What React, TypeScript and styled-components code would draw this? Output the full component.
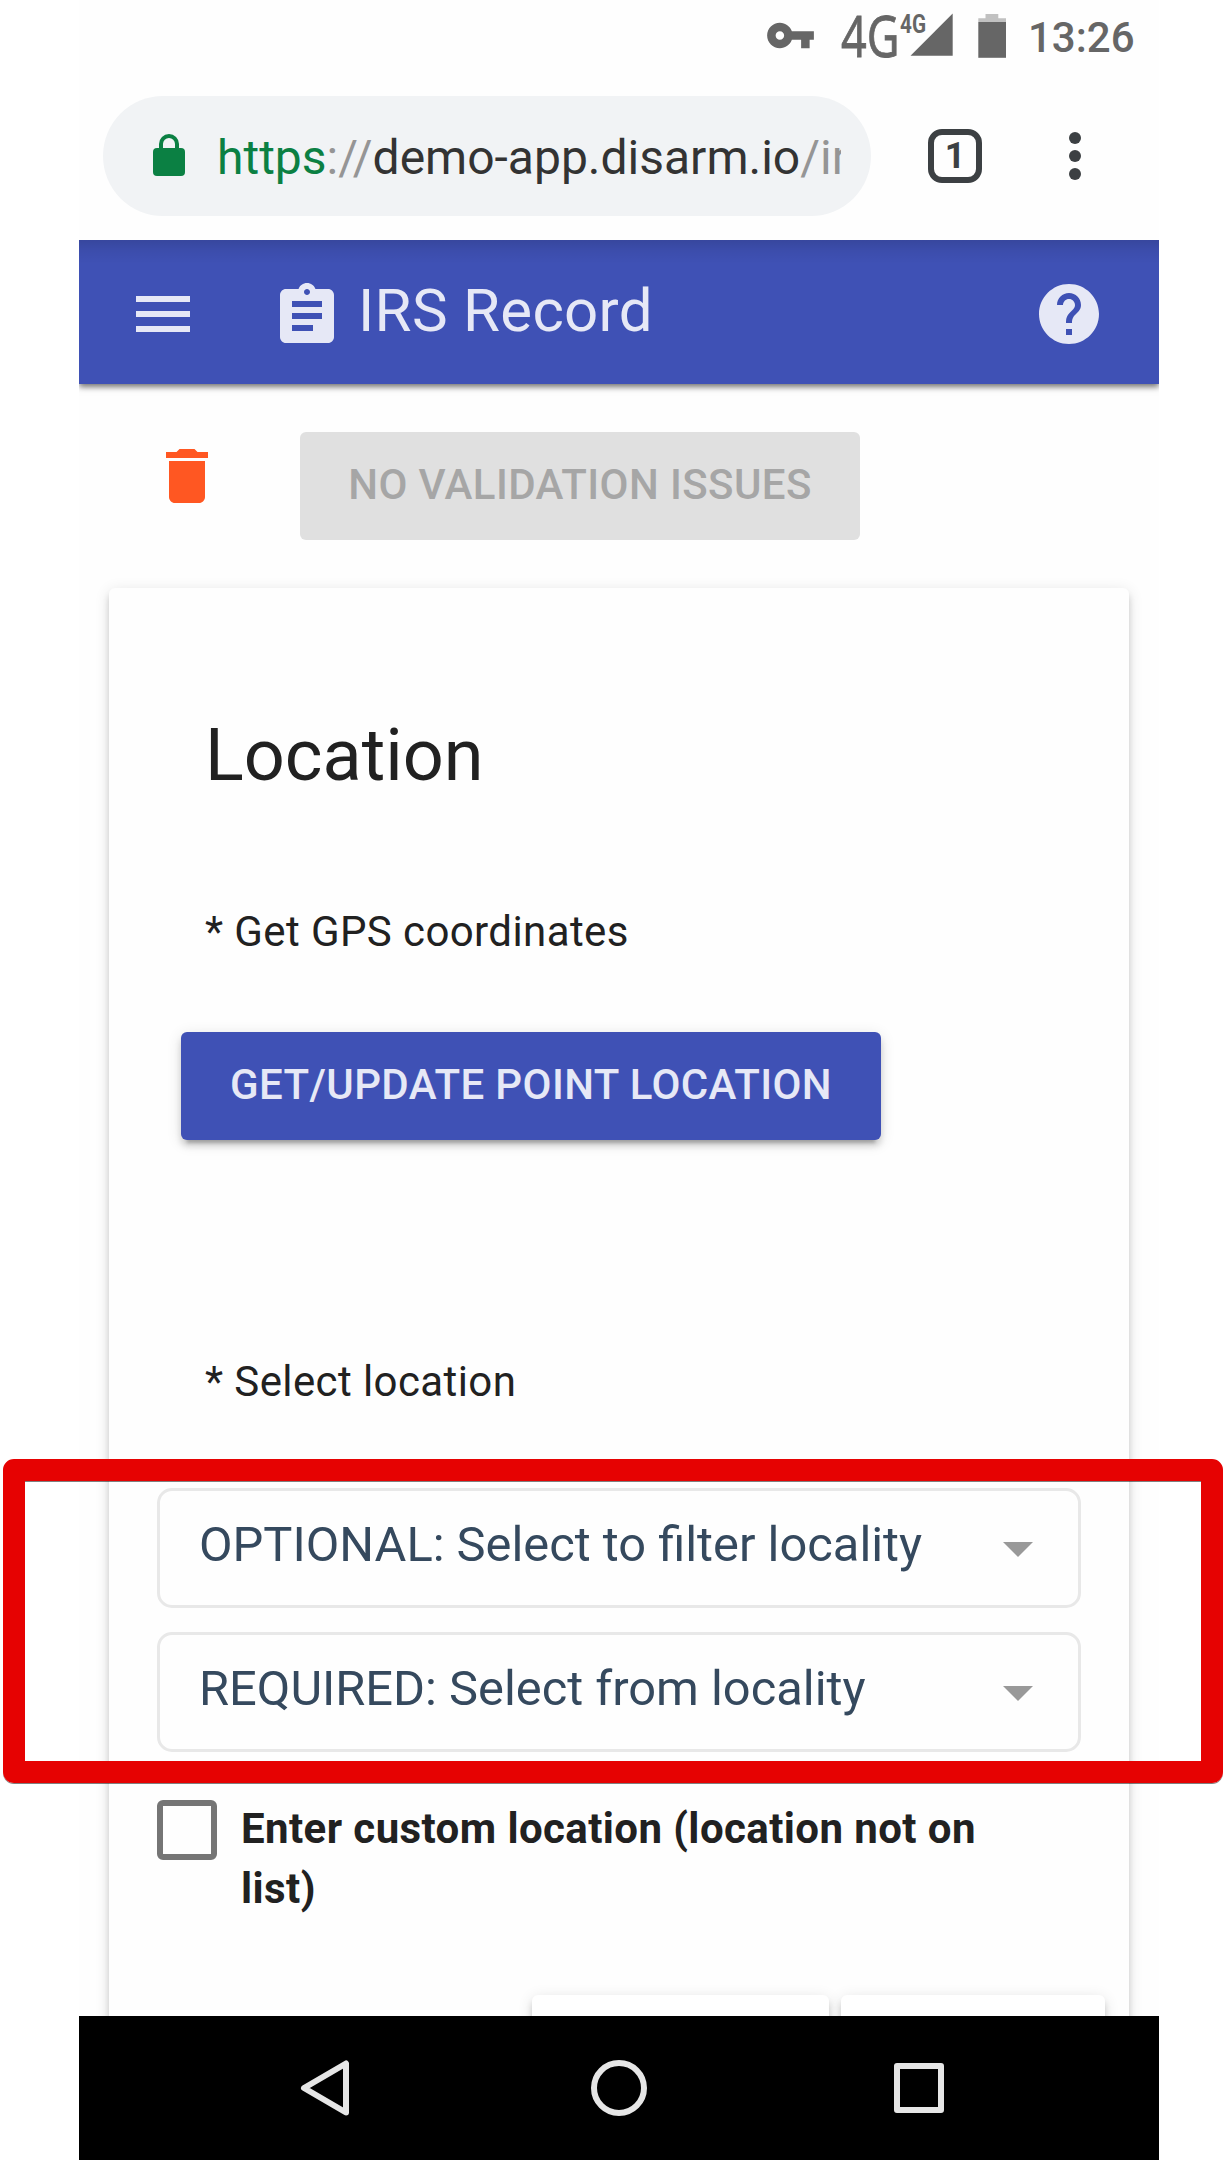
import React from "react";
import styled, { createGlobalStyle } from "styled-components";

const GlobalStyle = createGlobalStyle`
  *, *::before, *::after { box-sizing: border-box; }
  html, body { margin: 0; padding: 0; background: #fff; }
  body { font-family: Roboto, "Liberation Sans", sans-serif; overflow: hidden; }
  h1, h2, p { margin: 0; font-weight: 400; }
`;

const Page = styled.div`
  position: relative;
  width: 1227px;
  height: 2160px;
  padding-left: 79px;
  overflow: hidden;
  background: #fff;
`;

const Screen = styled.div`
  display: flex;
  flex-direction: column;
  width: 1080px;
  height: 2160px;
  background: #fefefe;
  overflow: hidden;
`;

const StatusBar = styled.header`
  display: flex;
  flex: none;
  height: 72px;
  padding-left: 686px;
  color: #666;
`;

const KeySlot = styled.div`
  width: 76px;
  padding-top: 10px;
`;

const SignalSlot = styled.div`
  width: 137px;
`;

const SignalIcon = styled.svg`
  display: block;
  width: 112px;
  height: 72px;
  overflow: visible;
  fill: #666;
`;

const BatterySlot = styled.div`
  width: 50px;
`;

const Clock = styled.time`
  font-size: 42px;
  line-height: 50px;
  padding-top: 13px;
  font-weight: 500;
  white-space: nowrap;
`;

const BrowserBar = styled.div`
  display: flex;
  flex: none;
  align-items: center;
  height: 168px;
  padding: 0 0 0 24px;
`;

const AddressPill = styled.div`
  display: flex;
  align-items: center;
  width: 768px;
  height: 120px;
  padding: 0 30px 2px 50px;
  border-radius: 60px;
  background: #f1f3f5;
`;

const LockIcon = styled.svg`
  flex: none;
  width: 32px;
  height: 42px;
  margin-right: 32px;
`;

const Url = styled.div`
  flex: 1;
  padding-top: 5px;
  overflow: hidden;
  white-space: nowrap;
  font-size: 48px;
  line-height: 60px;
  color: #333;
`;

const Scheme = styled.span`
  color: #0b8043;
`;

const Muted = styled.span`
  color: #959595;
`;

const TabCount = styled.div`
  display: flex;
  align-items: center;
  justify-content: center;
  width: 54px;
  height: 54px;
  margin-left: 57px;
  border: 6px solid #3c4043;
  border-radius: 14px;
  color: #3c4043;
  font-size: 36px;
  line-height: 42px;
  font-weight: 700;
`;

const MenuDots = styled.div`
  display: flex;
  flex-direction: column;
  gap: 6px;
  margin-left: 87px;
`;

const Dot = styled.i`
  width: 12px;
  height: 12px;
  border-radius: 50%;
  background: #3c4043;
`;

const AppBar = styled.div`
  display: flex;
  flex: none;
  align-items: flex-start;
  height: 144px;
  padding: 38px 54px 0 48px;
  color: #e6e8f6;
  background: linear-gradient(rgba(0, 0, 0, 0.13), rgba(0, 0, 0, 0.05) 11px, transparent 24px), #3f51b5;
  box-shadow: 0 3px 6px rgba(0, 0, 0, 0.55);
  clip-path: inset(0 0 -20px 0);
  z-index: 1;
`;

const Glyph = styled.svg<{ $size?: number }>`
  display: block;
  flex: none;
  width: ${(p) => p.$size ?? 72}px;
  height: ${(p) => p.$size ?? 72}px;
  fill: currentColor;
`;

const TitleGroup = styled.div`
  display: flex;
  flex: 1;
  padding: 2px 0 0 72px;
`;

const Title = styled.h1`
  padding: 1px 0 0 15px;
  font-size: 60px;
  line-height: 60px;
  letter-spacing: 0.3px;
  white-space: nowrap;
`;

const Body = styled.main`
  display: flex;
  flex: 1;
  flex-direction: column;
  min-height: 0;
  padding: 48px 30px 0;
  overflow: hidden;
`;

const Actions = styled.div`
  display: flex;
  flex: none;
  align-items: flex-start;
  margin-bottom: 48px;
`;

const DeleteButton = styled.div`
  padding: 8px 77px 0 42px;
  color: #ff5722;
`;

const Button = styled.button<{ $width: number; $disabled?: boolean }>`
  display: flex;
  flex: none;
  align-items: center;
  justify-content: center;
  width: ${(p) => p.$width}px;
  height: 108px;
  padding: 0 0 3px;
  border: 0;
  border-radius: 6px;
  font-family: inherit;
  font-size: 42px;
  line-height: 50px;
  font-weight: 500;
  letter-spacing: 0.4px;
  white-space: nowrap;
  color: ${(p) => (p.$disabled ? "#a6a6a6" : "#e6e8f6")};
  background: ${(p) => (p.$disabled ? "#e0e0e0" : "#3f51b5")};
  box-shadow: ${(p) =>
    p.$disabled
      ? "none"
      : "0 9px 3px -6px rgba(0,0,0,.2), 0 6px 6px rgba(0,0,0,.14), 0 3px 15px rgba(0,0,0,.12)"};
`;

const Card = styled.section`
  display: flex;
  flex: none;
  flex-direction: column;
  align-items: flex-start;
  height: 1500px;
  padding: 0 24px 0 48px;
  border-radius: 6px;
  background: #fefefe;
  box-shadow: 0 9px 3px -6px rgba(0, 0, 0, 0.2), 0 6px 6px rgba(0, 0, 0, 0.14),
    0 3px 15px rgba(0, 0, 0, 0.12);
`;

const Heading = styled.h2`
  margin: 120px 0 0 48px;
  font-size: 72px;
  line-height: 96px;
  color: #212121;
`;

const Hint = styled.p<{ $top: number }>`
  margin: ${(p) => p.$top}px 0 0 48px;
  font-size: 42px;
  line-height: 60px;
  letter-spacing: 0.4px;
  white-space: nowrap;
  color: #212121;
`;

const PointAction = styled.div`
  padding: 70px 0 0 24px;
`;

const Selects = styled.div`
  display: flex;
  flex-direction: column;
  gap: 24px;
  width: 924px;
  margin-top: 76px;
`;

const Select = styled.div`
  display: flex;
  align-items: center;
  justify-content: space-between;
  height: 120px;
  padding: 0 45px 6px 39px;
  border: 3px solid #e8e8e8;
  border-radius: 15px;
  font-size: 48.8px;
  line-height: 60px;
  white-space: nowrap;
  color: #35495e;
`;

const Caret = styled.i`
  width: 0;
  height: 0;
  margin-top: 8px;
  border: 15px solid transparent;
  border-top-color: #999;
  border-bottom-width: 0;
`;

const CheckRow = styled.div`
  display: flex;
  margin-top: 48px;
`;

const CheckBox = styled.span`
  flex: none;
  width: 60px;
  height: 60px;
  border: 6px solid #757575;
  border-radius: 6px;
`;

const CheckLabel = styled.span`
  padding-left: 24px;
  width: 820px;
  margin-top: -1px;
  font-size: 42px;
  line-height: 60px;
  font-weight: 700;
  letter-spacing: 0.41px;
  color: #212121;
`;

const FooterButtons = styled.div`
  display: flex;
  gap: 12px;
  align-self: flex-end;
  margin-top: 76px;
`;

const FooterButton = styled.div<{ $width: number }>`
  width: ${(p) => p.$width}px;
  height: 108px;
  border-radius: 6px;
  background: #fff;
  box-shadow: 0 9px 3px -6px rgba(0, 0, 0, 0.2), 0 6px 6px rgba(0, 0, 0, 0.14),
    0 3px 15px rgba(0, 0, 0, 0.12);
`;

const NavBar = styled.nav`
  display: flex;
  flex: none;
  align-items: center;
  justify-content: space-between;
  height: 144px;
  padding: 0 204px;
  background: #000;
  z-index: 1;
`;

const NavIcon = styled.svg`
  width: 72px;
  height: 72px;
  fill: none;
  stroke: #e6e6e6;
  stroke-width: 6;
  stroke-linejoin: round;
`;

const Highlight = styled.div`
  position: absolute;
  left: 3px;
  top: 1459px;
  width: 1220px;
  height: 324px;
  border: 22px solid #e60202;
  border-radius: 11px;
  box-shadow: 0 1px 0 rgba(0, 0, 0, 0.5), inset 0 1px 0 rgba(0, 0, 0, 0.5);
`;

export default function App() {
  return (
    <>
      <GlobalStyle />
      <Page>
        <Screen>
          <StatusBar>
            <KeySlot>
              <Glyph $size={51} viewBox="0 0 24 24">
                <path d="M12.65 10C11.83 7.67 9.61 6 7 6c-3.31 0-6 2.69-6 6s2.69 6 6 6c2.61 0 4.83-1.67 5.65-4H17v4h4v-4h2v-4H12.65zM7 14c-1.1 0-2-.9-2-2s.9-2 2-2 2 .9 2 2-.9 2-2 2z" />
              </Glyph>
            </KeySlot>
            <SignalSlot>
              <SignalIcon viewBox="841 0 112 72">
                <text x="841" y="57.3" fontFamily="Noto Sans" fontSize="57" stroke="#666" strokeWidth="0.8" textLength="58.5" lengthAdjust="spacingAndGlyphs">
                  4G
                </text>
                <text x="900" y="32.5" fontFamily="Roboto" fontWeight="700" fontSize="25.5" textLength="26" lengthAdjust="spacingAndGlyphs">
                  4G
                </text>
                <path d="M952.7 13.5V55.8H910.5z" />
              </SignalIcon>
            </SignalSlot>
            <BatterySlot>
              <svg width="30" height="72" viewBox="978 0 30 72">
                <path fill="#c1c1c1" d="M985.5 14h12.8v4.3h7.7V22h-27.7v-3.7h7.2z" />
                <path fill="#666" d="M978.3 22H1006v35.8h-27.7z" />
              </svg>
            </BatterySlot>
            <Clock>13:26</Clock>
          </StatusBar>

          <BrowserBar>
            <AddressPill>
              <LockIcon viewBox="0 0 32 42">
                <path d="M8 16V10a8 8 0 0 1 16 0v6" fill="none" stroke="#0b8043" strokeWidth="4" />
                <rect y="14" width="32" height="28" rx="4" fill="#0b8043" />
              </LockIcon>
              <Url>
                <Scheme>https</Scheme>
                <Muted>://</Muted>demo-app.disarm.io<Muted>/ir</Muted>
              </Url>
            </AddressPill>
            <TabCount>1</TabCount>
            <MenuDots>
              <Dot />
              <Dot />
              <Dot />
            </MenuDots>
          </BrowserBar>

          <AppBar>
            <Glyph viewBox="0 0 24 24">
              <path d="M3 18h18v-2H3v2zm0-5h18v-2H3v2zm0-7v2h18V6H3z" />
            </Glyph>
            <TitleGroup>
              <Glyph viewBox="0 0 24 24">
                <path d="M19 3h-4.18C14.4 1.84 13.3 1 12 1c-1.3 0-2.4.84-2.82 2H5c-1.1 0-2 .9-2 2v14c0 1.1.9 2 2 2h14c1.1 0 2-.9 2-2V5c0-1.1-.9-2-2-2zm-7 0c.55 0 1 .45 1 1s-.45 1-1 1-1-.45-1-1 .45-1 1-1zm2 14H7v-2h7v2zm3-4H7v-2h10v2zm0-4H7V7h10v2z" />
              </Glyph>
              <Title>IRS Record</Title>
            </TitleGroup>
            <Glyph viewBox="0 0 24 24">
              <path d="M12 2C6.48 2 2 6.48 2 12s4.48 10 10 10 10-4.48 10-10S17.52 2 12 2zm1 17h-2v-2h2v2zm2.07-7.75l-.9.92C13.45 12.9 13 13.5 13 15h-2v-.5c0-1.1.45-2.1 1.17-2.83l1.24-1.26c.37-.36.59-.86.59-1.41 0-1.1-.9-2-2-2s-2 .9-2 2H8c0-2.21 1.79-4 4-4s4 1.79 4 4c0 .88-.36 1.68-.93 2.25z" />
            </Glyph>
          </AppBar>

          <Body>
            <Actions>
              <DeleteButton>
                <Glyph viewBox="0 0 24 24">
                  <path d="M6 19c0 1.1.9 2 2 2h8c1.1 0 2-.9 2-2V7H6v12zM19 4h-3.5l-1-1h-5l-1 1H5v2h14V4z" />
                </Glyph>
              </DeleteButton>
              <Button $width={560} $disabled>
                NO VALIDATION ISSUES
              </Button>
            </Actions>

            <Card>
              <Heading>Location</Heading>
              <Hint $top={98}>* Get GPS coordinates</Hint>
              <PointAction>
                <Button $width={700}>GET/UPDATE POINT LOCATION</Button>
              </PointAction>
              <Hint $top={212}>* Select location</Hint>
              <Selects>
                <Select>
                  OPTIONAL: Select to filter locality
                  <Caret />
                </Select>
                <Select>
                  REQUIRED: Select from locality
                  <Caret />
                </Select>
              </Selects>
              <CheckRow>
                <CheckBox />
                <CheckLabel>Enter custom location (location not on list)</CheckLabel>
              </CheckRow>
              <FooterButtons>
                <FooterButton $width={297} />
                <FooterButton $width={264} />
              </FooterButtons>
            </Card>
          </Body>

          <NavBar>
            <NavIcon viewBox="0 0 72 72">
              <path d="M63 11.5V60.5L21 36z" />
            </NavIcon>
            <NavIcon viewBox="0 0 72 72">
              <circle cx="36" cy="36" r="25" />
            </NavIcon>
            <NavIcon viewBox="0 0 72 72">
              <rect x="14" y="14" width="44" height="44" />
            </NavIcon>
          </NavBar>
        </Screen>
        <Highlight />
      </Page>
    </>
  );
}
